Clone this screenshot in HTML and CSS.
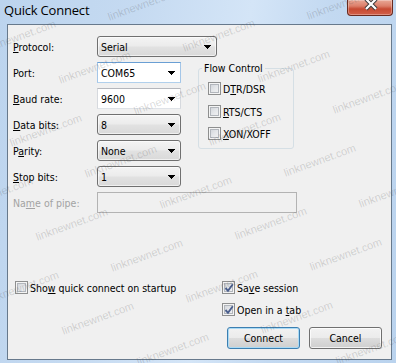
FILE: index.html
```html
<!DOCTYPE html>
<html lang="en">
<head>
<meta charset="utf-8">
<title>Quick Connect</title>
<link rel="stylesheet" href="styles.css">
</head>
<body>
<div class="window">
  <div class="titlebar">
    <span class="title">Quick Connect</span>
    <div class="close">
      <svg width="14" height="11" viewBox="0 0 14 11"><path d="M2 -1L12 9M12 -1L2 9" stroke="#3a3a3a" stroke-width="4.2" fill="none"/><path d="M2 -1L12 9M12 -1L2 9" stroke="#ffffff" stroke-width="2.2" fill="none"/></svg>
    </div>
  </div>
  <div class="client">
    <div class="form">
      <span class="lbl"><u>P</u>rotocol:</span>
      <div class="dd proto"><span>Serial</span><svg class="arr" width="7" height="4" viewBox="0 0 7 4"><path d="M0 0h7v1H0zM1 1h5v1H1zM2 2h3v1H2zM3 3h1v1H3z"/></svg></div>

      <span class="lbl">Port:</span>
      <div class="combo focus"><span>COM65</span><svg class="arr" width="7" height="4" viewBox="0 0 7 4"><path d="M0 0h7v1H0zM1 1h5v1H1zM2 2h3v1H2zM3 3h1v1H3z"/></svg></div>
      <fieldset class="fc">
        <legend>Flow Control</legend>
        <div class="cbrow"><span class="cb"></span><span>D<u>T</u>R/DSR</span></div>
        <div class="cbrow"><span class="cb"></span><span><u>R</u>TS/CTS</span></div>
        <div class="cbrow"><span class="cb"></span><span><u>X</u>ON/XOFF</span></div>
      </fieldset>

      <span class="lbl"><u>B</u>aud rate:</span>
      <div class="combo"><span>9600</span><svg class="arr" width="7" height="4" viewBox="0 0 7 4"><path d="M0 0h7v1H0zM1 1h5v1H1zM2 2h3v1H2zM3 3h1v1H3z"/></svg></div>

      <span class="lbl"><u>D</u>ata bits:</span>
      <div class="dd"><span>8</span><svg class="arr" width="7" height="4" viewBox="0 0 7 4"><path d="M0 0h7v1H0zM1 1h5v1H1zM2 2h3v1H2zM3 3h1v1H3z"/></svg></div>

      <span class="lbl">P<u>a</u>rity:</span>
      <div class="dd"><span>None</span><svg class="arr" width="7" height="4" viewBox="0 0 7 4"><path d="M0 0h7v1H0zM1 1h5v1H1zM2 2h3v1H2zM3 3h1v1H3z"/></svg></div>

      <span class="lbl"><u>S</u>top bits:</span>
      <div class="dd"><span>1</span><svg class="arr" width="7" height="4" viewBox="0 0 7 4"><path d="M0 0h7v1H0zM1 1h5v1H1zM2 2h3v1H2zM3 3h1v1H3z"/></svg></div>

      <span class="lbl dis">Na<u>m</u>e of pipe:</span>
      <div class="pipe"></div>
    </div>

    <div class="bottom">
      <div class="cbrow"><span class="cb"></span><span>Sho<u>w</u> quick connect on startup</span></div>
      <div class="cbrow"><span class="cb"><svg width="10" height="10" viewBox="0 0 10 10"><path d="M1.5 5L4 7.8L8.8 1.3" fill="none" stroke="#4b5f8d" stroke-width="1.9"/></svg></span><span>Sa<u>v</u>e session</span></div>
      <div class="cbrow c2"><span class="cb"><svg width="10" height="10" viewBox="0 0 10 10"><path d="M1.5 5L4 7.8L8.8 1.3" fill="none" stroke="#4b5f8d" stroke-width="1.9"/></svg></span><span>Open in a <u>t</u>ab</span></div>
      <div class="buttons">
        <button class="btn def" type="button">Connect</button>
        <button class="btn" type="button">Cancel</button>
      </div>
    </div>
  </div>

  <div class="wm" aria-hidden="true">
    <span style="left:305px;top:-3px">linknewnet.com</span>
    <span style="left:106px;top:-2px">linknewnet.com</span>
    <span style="left:181px;top:29px">linknewnet.com</span>
    <span style="left:256px;top:60px">linknewnet.com</span>
    <span style="left:331px;top:91px">linknewnet.com</span>
    <span style="left:-18px;top:30px">linknewnet.com</span>
    <span style="left:57px;top:61px">linknewnet.com</span>
    <span style="left:132px;top:92px">linknewnet.com</span>
    <span style="left:207px;top:123px">linknewnet.com</span>
    <span style="left:282px;top:154px">linknewnet.com</span>
    <span style="left:357px;top:185px">linknewnet.com</span>
    <span style="left:8px;top:124px">linknewnet.com</span>
    <span style="left:83px;top:155px">linknewnet.com</span>
    <span style="left:158px;top:186px">linknewnet.com</span>
    <span style="left:233px;top:217px">linknewnet.com</span>
    <span style="left:308px;top:248px">linknewnet.com</span>
    <span style="left:-41px;top:187px">linknewnet.com</span>
    <span style="left:34px;top:218px">linknewnet.com</span>
    <span style="left:109px;top:249px">linknewnet.com</span>
    <span style="left:184px;top:280px">linknewnet.com</span>
    <span style="left:259px;top:311px">linknewnet.com</span>
    <span style="left:334px;top:342px">linknewnet.com</span>
    <span style="left:-15px;top:281px">linknewnet.com</span>
    <span style="left:60px;top:312px">linknewnet.com</span>
    <span style="left:135px;top:343px">linknewnet.com</span>
  </div>
</div>
</body>
</html>
```
FILE: styles.css
```css
* { box-sizing: border-box; }
html, body { margin: 0; padding: 0; }
body {
  width: 396px;
  height: 363px;
  overflow: hidden;
  font-family: "DejaVu Sans Condensed", "DejaVu Sans", sans-serif;
  font-stretch: condensed;
  font-size: 10.5px;
  color: #000;
}
u { text-decoration: underline; text-underline-offset: 1px; }

.window {
  position: relative;
  width: 396px;
  height: 363px;
  display: flex;
  flex-direction: column;
  background: linear-gradient(100deg, #bcd4ee 0%, #c5daf1 30%, #d4e5f7 55%, #c3d9f1 72%, #bad3ee 100%);
}

.titlebar {
  height: 24px;
  flex: none;
  display: flex;
  justify-content: space-between;
  align-items: flex-start;
  padding: 0 3px 0 4px;
}
.title {
  font-family: "Open Sans", sans-serif;
  font-stretch: normal;
  font-size: 13px;
  letter-spacing: -0.2px;
  line-height: 20px;
  color: #000;
}
.close {
  width: 46px;
  height: 16px;
  display: flex;
  justify-content: center;
  align-items: flex-start;
  border: 1px solid #6a2a1f;
  border-top: none;
  border-radius: 0 0 4px 4px;
  background: linear-gradient(#e9a896 0%, #dc7f6a 40%, #c74a32 60%, #d2604a 100%);
  box-shadow: inset 0 0 0 1px rgba(255, 255, 255, 0.3);
}
.close svg { display: block; margin-left: 1px; }

.client {
  flex: 1;
  margin: 0 4px 3px 7px;
  border: 1px solid #67798c;
  background: #f0f0f0;
  display: flex;
  flex-direction: column;
}

.form {
  display: grid;
  grid-template-columns: 67px 84px 96px;
  grid-auto-rows: 21px;
  column-gap: 17px;
  row-gap: 5px;
  padding: 11px 0 0 5px;
}
.lbl { grid-column: 1; align-self: center; white-space: nowrap; }
.lbl.dis { color: #a3a3a3; }

.dd, .combo {
  grid-column: 2;
  display: flex;
  align-items: center;
  justify-content: space-between;
  padding: 0 5px 0 3px;
  white-space: nowrap;
}
.dd {
  border: 1px solid #707070;
  border-radius: 3px;
  background: linear-gradient(#f4f4f4 0%, #ececec 45%, #e1e1e1 55%, #d9d9d9 100%);
  box-shadow: inset 0 0 0 1px rgba(255, 255, 255, 0.6);
}
.dd.proto { grid-column: 2 / span 2; width: 120px; justify-self: start; }
.combo {
  background: #fff;
  border: 1px solid;
  border-color: #b4b6bc #d6d9de #dfe3e8 #d6d9de;
}
.combo.focus { border-color: #6a9fd4 #a4c6e8 #b1d0ec #a4c6e8; }
.arr { display: block; flex: none; }

.pipe {
  grid-column: 2 / span 2;
  width: 200px;
  justify-self: start;
  border: 1px solid #b3b3b3;
  background: #f0f0f0;
}

.fc {
  grid-column: 3;
  grid-row: 2 / span 4;
  align-self: start;
  height: 87px;
  margin: 0;
  padding: 7px 0 0 9px;
  border: 1px solid #d5dfe5;
  border-radius: 3px;
  min-width: 0;
}
.fc legend {
  padding: 0 2px;
  margin-left: -6px;
  line-height: 13px;
}
.fc .cbrow + .cbrow { margin-top: 10px; }
.fc .cbrow:last-child { margin-top: 9px; }

.cbrow {
  display: flex;
  align-items: center;
  gap: 2px;
  height: 13px;
  white-space: nowrap;
}
.cb {
  width: 13px;
  height: 13px;
  flex: none;
  display: flex;
  align-items: center;
  justify-content: center;
  border: 1px solid #8e8f8f;
  background: linear-gradient(135deg, #cbcfd5 0%, #e4e6e9 50%, #f6f6f6 100%);
  box-shadow: inset 0 0 0 1px #f4f4f4, inset 0 0 0 2px #b2b6bc;
}
.cb svg { display: block; }

.bottom {
  margin-top: auto;
  display: grid;
  grid-template-columns: 207px 1fr;
  grid-template-rows: 13px 13px 24px;
  row-gap: 9px;
  padding: 0 9px 10px 7px;
}
.c2 { grid-column: 2; }
.buttons {
  grid-column: 1 / -1;
  align-self: end;
  display: flex;
  justify-content: flex-end;
  gap: 9px;
}
.btn {
  width: 73px;
  height: 22px;
  padding: 0;
  font: inherit;
  color: #000;
  border: 1px solid #707070;
  border-radius: 3px;
  background: linear-gradient(#f2f2f2 0%, #ebebeb 50%, #dddddd 50%, #cfcfcf 100%);
  box-shadow: inset 0 0 0 1px rgba(255, 255, 255, 0.75);
}
.btn.def {
  border-color: #3c7fb1;
  box-shadow: inset 0 0 0 1px #a9daf5;
}

.wm {
  position: absolute;
  inset: 0;
  overflow: hidden;
  pointer-events: none;
}
.wm span {
  position: absolute;
  font-family: "Liberation Sans", Arial, sans-serif;
  font-stretch: normal;
  font-size: 11px;
  line-height: 13px;
  white-space: nowrap;
  color: rgba(70, 70, 70, 0.2);
  transform: rotate(-20deg);
}
```
